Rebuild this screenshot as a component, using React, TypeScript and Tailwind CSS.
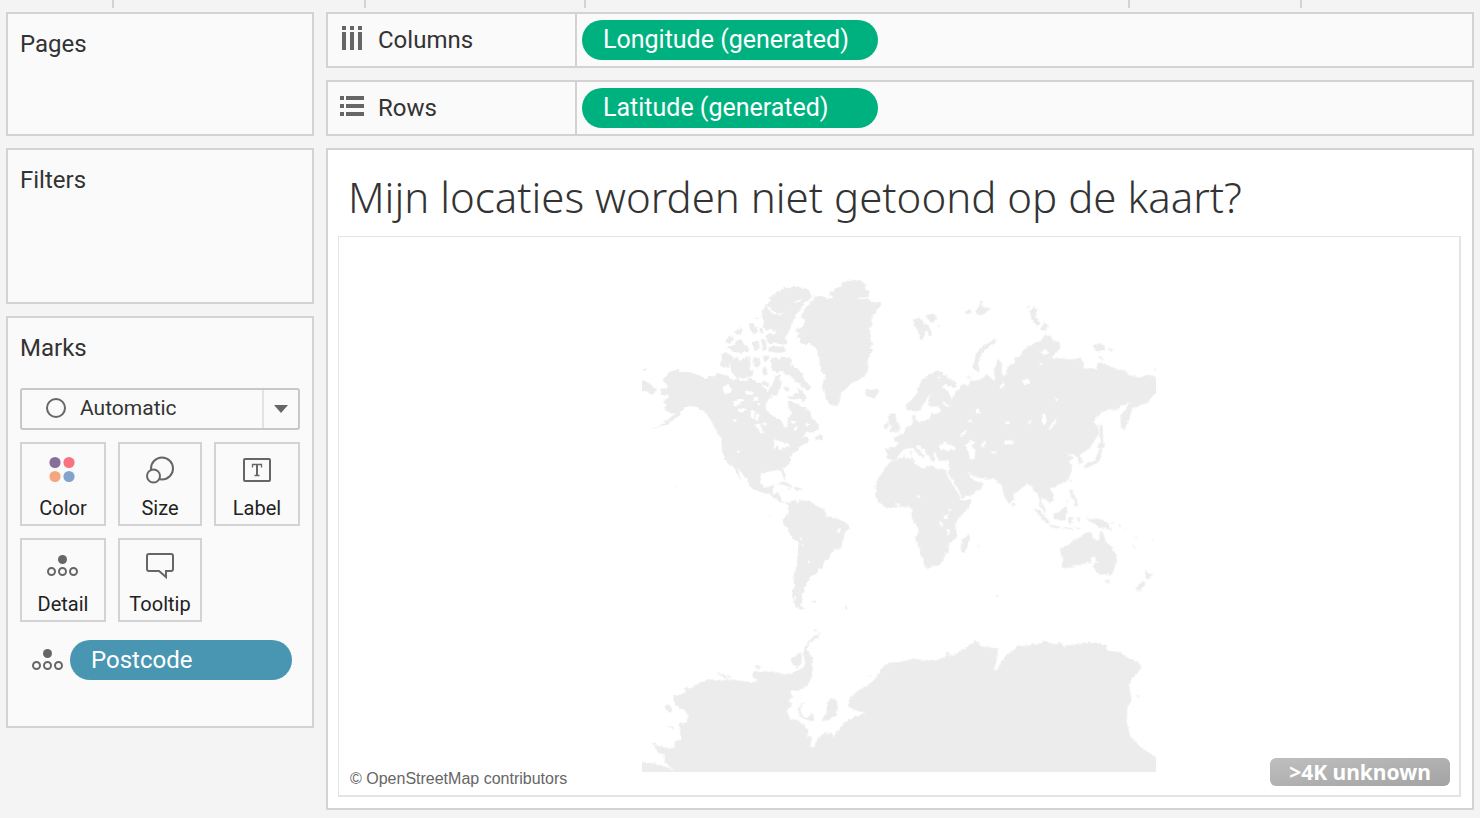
import type { ReactNode } from "react";

const ticks = ["a", "b", "c", "d", "e"];

function DetailIcon() {
  return (
    <svg width="32" height="22" viewBox="0 0 32 22" fill="none" stroke="#666" strokeWidth="2">
      <circle cx="15.5" cy="4.5" r="4.5" fill="#666" stroke="none" />
      <circle cx="4.5" cy="16.5" r="3.5" />
      <circle cx="15.5" cy="16.5" r="3.5" />
      <circle cx="26.5" cy="16.5" r="3.5" />
    </svg>
  );
}

function ColorIcon() {
  return (
    <svg width="28" height="28" viewBox="0 0 28 28">
      <circle cx="6" cy="6.5" r="5.6" fill="#86709a" />
      <circle cx="20" cy="6.5" r="5.6" fill="#f97280" />
      <circle cx="6" cy="20.5" r="5.6" fill="#f4a77e" />
      <circle cx="20" cy="20.5" r="5.6" fill="#82a4cc" />
    </svg>
  );
}

function SizeIcon() {
  return (
    <svg width="28" height="28" viewBox="0 0 28 28" fill="#fafafa" stroke="#666" strokeWidth="2">
      <circle cx="16" cy="12.5" r="11" />
      <circle cx="7.5" cy="20" r="6.5" />
    </svg>
  );
}

function LabelIcon() {
  return (
    <svg width="28" height="24" viewBox="0 0 28 24" fill="none" stroke="#666">
      <rect x="1" y="1" width="26" height="22" rx="1" strokeWidth="2" />
      <path d="M9.5 9.5V6.5H18.5V9.5M14 6.5V17.5M11.5 17.5H16.5" strokeWidth="1.3" />
      <path d="M14 6.5V17.5" strokeWidth="2" />
    </svg>
  );
}

function TooltipIcon() {
  return (
    <svg width="28" height="28" viewBox="0 0 28 28" fill="none" stroke="#666" strokeWidth="2">
      <path d="M3 2H25Q27 2 27 4V17Q27 19 25 19H20V25L13 19H3Q1 19 1 17V4Q1 2 3 2Z" />
    </svg>
  );
}

function ColumnsIcon() {
  return (
    <svg width="24" height="28" viewBox="0 0 24 28" fill="#666">
      <path d="M2 0h4v4H2zM10 0h4v4h-4zM18 0h4v4h-4zM2 6h4v18H2zM10 6h4v18h-4zM18 6h4v18h-4z" />
    </svg>
  );
}

function RowsIcon() {
  return (
    <svg width="24" height="24" viewBox="0 0 24 24" fill="#666">
      <path d="M0 0h4v4H0zM0 8h4v4H0zM0 16h4v4H0zM6 0h18v4H6zM6 8h18v4H6zM6 16h18v4H6z" />
    </svg>
  );
}

function WorldMap() {
  return (
    <svg
      width="514"
      height="514"
      viewBox="0 -57 1542 1542"
      fill="#ececec"
      role="img"
      aria-label="World map"
    >
      <defs>
        {/* roughens the coastlines */}
        <filter id="coast" x="-2%" y="-2%" width="104%" height="104%" colorInterpolationFilters="sRGB">
          <feTurbulence type="fractalNoise" baseFrequency="0.09" numOctaves="3" seed="4" result="n" />
          <feDisplacementMap in="SourceGraphic" in2="n" scale="11" xChannelSelector="R" yChannelSelector="G" />
        </filter>
        <clipPath id="world">
          <rect x="0" y="-57" width="1542" height="1538" />
        </clipPath>
      </defs>
      <g clipPath="url(#world)">
        <g filter="url(#coast)">
          {/* Alaska, Canada, Arctic islands, Greenland, Iceland */}
          <g transform="translate(-36 -24)">
            <path d="M96 332L108 316L122 305L144 297L152 307L176 306L196 312L214 318L228 330L240 316L252 322L262 308L276 314L292 318L306 330L318 324L330 334L350 330L362 322L374 334L392 340L404 330L416 344L424 352L432 330L440 312L450 318L456 336L452 352L446 366L438 376L426 378L414 390L404 402L410 420L420 432L436 442L450 448L458 460L464 476L472 468L472 450L480 440L482 424L476 410L474 394L484 392L492 400L506 402L514 410L528 412L538 424L546 444L562 460L568 476L552 486L530 488L512 504L500 512L520 510L528 502L524 518L510 528L500 545L275 545L276 520L270 500L260 484L250 466L240 446L222 424L204 412L178 408L160 414L150 428L138 432L120 430L102 414L110 402L98 396L106 388L120 382L110 374L94 372L92 358L108 354L120 350L106 342Z" />
            <path d="M52 480L88 468L110 452L130 434L150 426L154 434L132 446L108 464L88 470Z" />
            <path d="M20 326L54 334L64 346L80 356L78 366L66 374L50 364L20 362ZM36 294h12v5h-12z" />
            <path d="M300 272L318 264L334 270L346 264L356 258L362 280L358 296L372 304L366 316L350 324L334 326L316 320L306 308L300 294Z" />
            <path d="M274 252L290 248L304 256L312 264L300 276L294 290L282 294L270 284L276 268Z" />
            <path d="M284 216L298 198L310 204L300 222ZM316 186L330 174L340 178L334 192L318 194ZM356 164L366 158L378 170L384 186L370 192L360 180ZM388 172L398 176L402 192L388 186ZM376 140h8v8h-8z" />
            <path d="M290 232L312 226L320 210L336 208L344 224L356 232L354 244L334 248L312 246ZM362 218L384 212L392 236L374 240ZM392 206L406 210L412 240L398 240Z" />
            <path d="M368 262L388 260L392 284L380 294L370 282ZM398 258L418 256L416 272L402 276ZM396 292L408 288L412 312L398 318Z" />
            <path d="M424 262L440 262L446 270L456 262L472 260L484 268L484 284L502 296L518 312L520 326L532 338L544 350L540 362L528 358L514 352L508 340L496 336L486 320L470 316L458 302L448 308L430 304L422 290Z" />
            <path d="M470 382L490 376L506 366L502 354L516 362L528 380L524 394L510 386L494 388L480 388ZM462 350L474 348L478 364L466 366Z" />
            <path d="M414 100L424 90L418 82L440 66L462 54L490 50L524 54L540 66L547 76L538 90L520 100L514 116L498 132L490 152L484 170L474 186L466 204L474 220L462 224L440 218L424 222L412 212L408 196L420 188L432 194L440 186L424 178L410 182L398 170L402 154L394 142L396 122L408 108Z" />
            <path d="M416 232L436 228L466 232L466 246L440 248L416 244Z" />
            <path d="M497 180L512 172L524 164L524 150L510 140L522 124L528 110L546 94L552 80L576 78L590 86L606 84L598 66L608 64L618 54L636 48L634 38L656 32L690 30L706 42L704 54L720 66L716 80L680 84L700 88L712 84L722 92L740 98L752 94L755 104L744 118L736 132L728 134L724 150L728 166L716 174L722 190L720 206L728 222L720 236L730 240L718 254L712 276L716 288L712 304L704 318L690 328L664 340L648 356L634 364L630 388L622 412L612 408L600 404L590 388L580 364L576 346L586 320L574 300L570 280L566 258L560 236L540 222L518 222L506 216L512 206L500 202L510 192Z" />
            <path d="M704 362L712 358L726 360L738 356L746 362L746 374L730 384L714 380L704 372Z" />
            <path d="M568 492L578 500L580 512L566 506L552 512L558 500Z" />
            <g fill="#fff">
              <path d="M276 352L292 344L306 354L302 368L286 372ZM310 396L328 384L344 390L330 402L312 408ZM322 420L340 414L350 420L330 428ZM368 382L380 380L382 394L370 394ZM362 424L374 422L372 446L362 444ZM378 432L388 436L384 454L376 450ZM374 464L388 460L396 476L404 488L390 486ZM396 456L408 460L406 470ZM346 362L372 366L364 376L346 372ZM384 398L392 400L388 410ZM310 448h8v8h-8zM480 452L500 454L490 462ZM488 470L506 474L494 482ZM524 458L538 462L530 470ZM396 336L406 350L424 350L414 364L398 352Z" />
              <path d="M414 106L424 120L444 132L468 126L448 136L428 130L412 116ZM492 96L514 88L512 94L496 100ZM432 394L440 386L448 392Z" />
            </g>
          </g>
          {/* United States, Central and South America */}
          <g transform="translate(-6 486)">
            <path d="M246 -10L246 36L254 54L262 70L276 80L290 88L290 100L300 116L308 126L300 112L296 96L292 84L300 92L312 108L324 122L328 138L344 150L362 156L376 160L388 160L398 170L412 178L420 190L434 186L440 194L450 200L450 190L440 188L428 184L420 178L418 160L400 160L398 150L404 134L390 140L374 142L362 132L360 112L366 98L384 96L400 92L414 90L424 96L430 112L436 118L434 100L430 86L444 74L454 62L450 50L458 40L468 34L474 20L490 14L500 10L508 0L500 -10Z" />
            <path d="M410 131L428 125L444 131L460 142L444 141L430 133ZM460 142L478 142L490 150L466 150ZM442 147h10v4h-10zM108 136l6 6h-6zM386 226h5v4h-5z" />
            <path d="M446 204L452 188L466 178L470 190L478 180L494 182L512 184L524 194L540 202L554 206L560 220L556 230L572 230L592 236L612 244L628 256L626 270L610 284L608 304L602 324L586 328L572 340L568 356L552 366L548 382L532 386L530 402L512 408L508 420L498 426L500 438L490 442L494 456L486 466L488 484L480 494L496 508L480 508L464 498L462 482L456 470L458 452L464 440L460 420L462 400L468 384L472 360L474 330L476 308L462 298L450 286L446 270L430 252L432 238L440 222L446 214Z" />
            <path d="M518 483h10v5h-10zM616 501h6v5h-6z" />
            <path fill="#fff" d="M400 0L418 2L436 10L450 14L446 22L430 20L424 28L416 30L414 16L402 28L400 14ZM290 28L300 28L298 38L292 38ZM590 272L602 262L602 272L594 278ZM478 290L486 294L484 302ZM484 312L492 314L488 320ZM504 362h8v6h-8zM462 472h7v6h-7z" />
          </g>
          {/* Eurasia */}
          <g transform="translate(684 36)">
            <path d="M48 474L80 470L86 460L66 444L82 438L98 428L110 412L128 404L126 378L136 370L134 384L146 398L160 392L180 386L184 370L210 366L206 350L180 350L176 340L178 320L190 308L176 318L164 332L158 350L150 362L136 364L124 360L110 362L108 346L124 330L138 314L146 290L158 270L178 252L204 240L220 250L240 266L260 280L256 294L240 290L224 282L216 292L232 304L240 316L246 330L252 314L262 300L272 286L282 282L294 288L300 272L320 270L342 262L346 250L360 262L374 272L372 236L384 206L394 214L396 244L400 262L410 250L410 232L430 222L434 202L452 200L456 184L476 168L500 158L516 150L526 132L540 136L548 152L568 156L572 172L556 192L542 206L560 204L600 208L630 204L640 216L640 236L680 234L684 218L706 220L730 236L762 240L776 254L806 262L840 254L870 266L870 300L846 320L832 338L812 348L786 352L780 380L766 412L758 420L750 390L758 368L766 356L776 344L784 336L768 342L752 348L744 360L716 360L696 366L680 384L668 396L684 406L688 430L670 456L660 474L640 488L628 492L638 508L638 520L626 520L622 500L604 494L590 490L610 504L596 512L606 532L602 556L590 574L570 582L556 590L540 596L552 616L552 630L536 640L528 628L516 622L514 640L524 656L530 672L516 656L510 640L506 620L496 606L488 594L476 578L460 590L444 604L430 612L430 628L418 642L408 630L398 604L396 586L384 576L372 568L330 564L310 560L292 544L300 560L312 572L342 580L330 598L300 616L276 624L262 592L242 560L234 548L238 530L236 510L210 514L200 500L198 486L190 486L196 510L186 516L178 500L160 478L146 466L136 468L150 484L166 498L160 508L144 492L128 472L104 478L88 492L84 506L70 510L50 506Z" />
            <path d="M56 424L64 412L58 400L54 380L66 366L76 374L78 392L92 410L88 424L66 426ZM42 402L54 396L58 412L46 418Z" />
            <path d="M306 230L314 214L316 196L330 176L350 160L376 146L380 154L362 168L340 184L330 200L324 220L330 244L314 240Z" />
            <path d="M132 88L150 84L160 96L176 106L188 136L180 138L168 122L158 150L150 146L144 124L134 108ZM166 76L188 70L204 82L196 94L178 96ZM204 106h8v4h-8z" />
            <path d="M282 66L300 58L306 68L290 74ZM318 60L330 40L338 52L364 54L350 66L336 76L318 72ZM330 34h8v6h-8z" />
            <path d="M478 62L492 48L500 62L498 82L512 98L502 108L488 94L482 78ZM510 120L522 96L536 108L528 122ZM470 50h8v4h-8z" />
            <path d="M670 166L688 160L704 166L704 180L680 184ZM712 174L728 178L724 186ZM684 196L698 202L696 210ZM850 234h8v6h-8zM292 258h10v8h-10z" />
            <path d="M688 402L698 406L700 460L708 470L694 466L690 440ZM682 486L692 480L690 500L678 512Z" />
            <path d="M96 506L102 490L104 506ZM118 482L126 484L124 498ZM112 504L130 502L128 512Z" />
            <g fill="#fff">
              <path d="M206 468L226 454L232 464L254 466L256 478L236 482L222 480L210 480ZM288 462L304 450L314 456L304 466L316 482L314 508L300 508L296 486L288 474ZM332 464L344 450L348 460L338 474ZM398 454L420 450L436 456L424 464L404 460ZM534 416L546 400L558 386L554 404L540 420ZM516 374L524 370L530 390L526 406L516 398ZM550 320L566 328L560 336ZM268 440L284 422L292 420L278 440ZM456 272L476 266L480 280L462 284ZM508 186L526 180L540 188L520 194ZM474 392L482 392L480 406ZM320 358h8v12h-8zM290 392L306 390L302 400ZM200 258L212 258L208 272ZM364 484h14v6h-14zM408 394h10v6h-10zM508 218h8v8h-8z" />
              <path d="M388 290L402 276L404 290L392 296ZM166 336L176 320L172 350L162 354ZM210 330L232 340L240 350L222 344ZM186 370L196 362L214 364L196 372Z" />
            </g>
          </g>
          {/* Africa, south-east Asia, Oceania */}
          <g transform="translate(654 486)">
            <path d="M90 64L104 60L124 56L150 54L162 60L162 74L178 80L196 88L202 78L218 80L236 86L260 88L262 108L274 126L284 144L300 170L304 182L334 178L330 196L314 216L298 232L288 250L290 294L268 310L266 334L254 344L250 362L234 376L202 384L194 382L190 358L180 340L178 320L168 306L166 290L176 276L168 254L156 240L154 224L158 210L146 200L126 202L112 200L82 206L66 196L52 182L44 164L48 150L46 130L56 112L68 98L76 84L84 70Z" />
            <path d="M326 280L330 296L322 320L316 338L304 336L302 318L306 300L318 292ZM352 318h6v4h-6zM456 188L464 192L462 202L456 198ZM408 467h10v4h-10z" />
            <path d="M674 72L690 66L706 62L712 46L716 30L724 28L724 48L716 66L700 74L686 82L674 84ZM716 8L738 16L722 28L714 22ZM628 120L636 118L632 130Z" />
            <path d="M522 204L540 212L556 230L572 250L560 250L544 236L530 218ZM538 186L550 194L560 220L548 212ZM580 222L600 214L616 198L624 208L616 240L596 242L582 236ZM568 254L600 260L600 266L568 261ZM608 262L640 264L640 268L608 267ZM624 232L644 231L632 240L642 250L634 248L626 250Z" />
            <path d="M628 150L638 148L640 166L650 176L654 198L644 200L646 186L634 176ZM618 188L628 176L622 190ZM640 190h10v6h-10zM654 234h6v12h-6zM650 262h8v5h-8z" />
            <path d="M676 230L690 238L706 234L730 240L742 250L758 272L740 266L724 266L706 252L690 246ZM748 250L766 246L756 254ZM776 254h6v4h-6zM792 264l12 6h-8zM826 290h5v5h-5zM816 316l12 8h-8zM874 300h7v4h-7z" />
            <path d="M600 324L624 316L640 300L660 292L674 278L696 278L698 294L716 302L722 274L730 280L738 304L756 322L770 344L768 368L756 404L722 404L708 394L696 378L688 368L656 374L640 380L612 386L606 378L610 360L602 344Z" />
            <path d="M734 420L750 420L744 434L736 430ZM856 386L866 400L880 402L864 420L856 412ZM824 448L848 424L858 428L840 452Z" />
            <path fill="#fff" d="M250 228L266 222L264 236L252 238ZM264 206L274 208L270 218ZM240 240L248 252L250 262L240 254ZM260 264L268 268L268 290L262 284ZM168 166L180 166L176 176ZM698 350L708 350L706 362L716 368L702 370L694 380L692 366ZM106 188L118 192L114 202Z" />
          </g>
          {/* Antarctica */}
          <g transform="translate(-36 1026)">
            <path d="M20 475L20 424L60 428L90 434L120 446L138 456L120 440L104 426L104 408L86 398L64 366L84 376L112 386L134 382L134 366L154 354L146 312L172 306L172 278L140 258L130 240L130 222L154 224L170 214L188 200L210 188L240 178L270 180L310 178L340 184L378 188L382 178L366 168L370 154L400 154L440 156L462 164L490 158L516 146L526 130L520 110L522 84L536 62L572 34L562 52L538 70L532 86L540 96L548 120L546 170L534 194L510 210L480 212L490 236L476 238L484 252L470 274L476 296L500 300L520 312L536 330L530 344L544 356L542 380L552 384L556 366L576 342L604 338L612 352L626 328L648 304L680 288L708 280L680 272L654 260L656 242L672 222L694 204L724 190L740 168L760 140L780 128L810 126L846 116L880 120L916 122L948 108L972 106L1010 80L1036 62L1056 80L1104 84L1102 110L1092 154L1100 150L1124 110L1168 76L1220 72L1246 64L1280 74L1288 64L1300 78L1380 68L1424 74L1436 92L1470 96L1492 112L1536 134L1528 156L1504 178L1498 200L1506 240L1492 262L1490 310L1500 346L1520 370L1540 386L1595 424L1595 475Z" />
            <path d="M574 304L590 280L590 250L602 234L618 238L624 256L620 284L600 298ZM502 270L516 248L524 246L510 268L516 286L536 292L548 276L552 300L536 304L514 292ZM450 240L470 234L486 260L470 264ZM104 260L118 252L128 274L112 274ZM106 318L130 320L132 328ZM480 122L500 100L516 98L514 132L500 144ZM260 158L290 166L308 172L284 174ZM372 138L396 140L386 150ZM948 96L954 94L956 108L948 108ZM1514 224L1530 226L1526 232ZM552 28L562 30L556 36ZM164 204L176 202L182 212L170 216ZM716 166l6 -6v12z" />
          </g>
        </g>
      </g>
    </svg>
  );
}

function Card({ title, className, children }: { title: string; className: string; children?: ReactNode }) {
  return (
    <section className={`border-2 border-[#d3d3d3] bg-[#fafafa] px-3 pt-3 ${className}`}>
      <h2 className="text-[24px] leading-9">{title}</h2>
      {children}
    </section>
  );
}

function MarkButton({ label, icon }: { label: string; icon: ReactNode }) {
  return (
    <button className="flex h-[84px] flex-col items-center border-2 border-[#d3d3d3] pt-3 text-[20px] hover:bg-gray-100">
      <span className="flex h-7 shrink-0 items-center">{icon}</span>
      <span className="mt-2 leading-8">{label}</span>
    </button>
  );
}

function Shelf({ label, icon, field }: { label: string; icon: ReactNode; field: string }) {
  return (
    <section className="flex h-14 border-2 border-[#d3d3d3] bg-[#fafafa]">
      <div className="flex w-[249px] shrink-0 items-center gap-[14px] border-r-2 border-[#d3d3d3] pl-3">
        {icon}
        <h2 className="text-[24px]">{label}</h2>
      </div>
      <button className="ml-[5px] mt-[6px] h-10 w-[296px] rounded-full bg-[#00b180] pl-[21px] text-left text-[25px] text-white">
        {field}
      </button>
    </section>
  );
}

export default function App() {
  return (
    <div className="flex min-h-screen flex-col bg-[#f4f4f4] font-['Roboto',sans-serif] text-[#333]">
      <div className="grid h-2 grid-cols-[114px_252px_220px_544px_172px]">
        {ticks.map((t) => (
          <div key={t} className="border-r-2 border-[#d3d3d3]" />
        ))}
      </div>

      <div className="grid flex-1 grid-cols-[308px_1fr] gap-3 px-[6px] pb-2 pt-1">
        <aside className="flex flex-col gap-3">
          <Card title="Pages" className="min-h-[124px]" />
          <Card title="Filters" className="min-h-[156px]" />
          <Card title="Marks" className="pb-[46px]">
            <div className="relative mt-[22px]">
              <select
                aria-label="Mark type"
                className="block h-[42px] w-full appearance-none rounded-[3px] border-2 border-[#c8c8c8] bg-[#fafafa] pl-[58px] text-[21px]"
              >
                <option>Automatic</option>
              </select>
              <svg className="pointer-events-none absolute left-[26px] top-[10px]" width="20" height="20" fill="none" stroke="#666" strokeWidth="2">
                <circle cx="10" cy="10" r="9" />
              </svg>
              <span className="pointer-events-none absolute inset-y-[2px] right-[2px] flex w-9 items-center justify-center border-l-2 border-[#e2e2e2]">
                <svg width="14" height="8" fill="#666">
                  <path d="M0 0H14L7 8Z" />
                </svg>
              </span>
            </div>

            <div className="mt-3 grid grid-cols-[86fr_84fr_86fr] gap-3 text-[#222]">
              <MarkButton label="Color" icon={<ColorIcon />} />
              <MarkButton label="Size" icon={<SizeIcon />} />
              <MarkButton label="Label" icon={<LabelIcon />} />
              <MarkButton label="Detail" icon={<DetailIcon />} />
              <MarkButton label="Tooltip" icon={<TooltipIcon />} />
            </div>

            <div className="mt-[18px] flex items-center gap-[6px] pl-3 pr-2">
              <DetailIcon />
              <button className="h-10 flex-1 rounded-full bg-[#4996b2] pl-[21px] text-left text-[24px] text-white">
                Postcode
              </button>
            </div>
          </Card>
        </aside>

        <main className="flex min-w-0 flex-col gap-3">
          <Shelf label="Columns" icon={<ColumnsIcon />} field="Longitude (generated)" />
          <Shelf label="Rows" icon={<RowsIcon />} field="Latitude (generated)" />

          <section className="flex flex-1 flex-col border-2 border-[#d3d3d3] bg-white pb-[11px] pl-[10px] pr-[11px]">
            <h1 className="pb-3 pl-[10px] pt-5 font-['Noto_Sans',sans-serif] text-[42px] font-light leading-[54px]">
              Mijn locaties worden niet getoond op de kaart?
            </h1>
            <div className="relative flex flex-1 items-center justify-center border-b-2 border-l border-r-2 border-t border-[#e4e4e4]">
              <WorldMap />
              <a
                href="#osm"
                className="absolute bottom-1 left-[11px] font-['Liberation_Sans',sans-serif] text-[16px] leading-6 text-[#666]"
              >
                © OpenStreetMap contributors
              </a>
              <button className="absolute bottom-[9px] right-[9px] h-7 w-[180px] rounded-md bg-gradient-to-br from-[#bfbfbf] to-[#a3a3a3] font-['Noto_Sans',sans-serif] text-[21px] font-bold leading-7 text-white">
                &gt;4K unknown
              </button>
            </div>
          </section>
        </main>
      </div>
    </div>
  );
}
